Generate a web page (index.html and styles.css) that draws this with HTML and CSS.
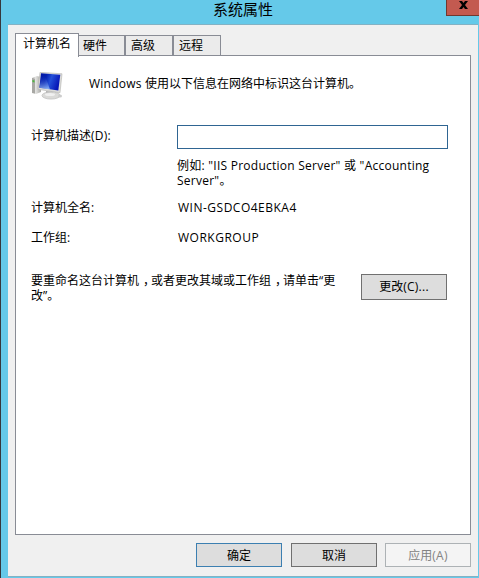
FILE: index.html
```html
<!DOCTYPE html>
<html lang="zh-CN">
<head>
<meta charset="utf-8">
<title>系统属性</title>
<link rel="stylesheet" href="styles.css">
</head>
<body>
<div class="window">
  <header class="titlebar">
    <h1 class="title">系统属性</h1>
    <button class="close" aria-label="关闭"><svg width="9" height="8" viewBox="0 0 9 8"><path d="M0 0h3l1.500 2L6 0h3L6 4l3 4H6L4.500 6 3 8H0l3-4z"/></svg></button>
  </header>
  <main class="client">
    <nav class="tabs">
      <span class="tab active">计算机名</span><span class="tab">硬件</span><span class="tab">高级</span><span class="tab">远程</span>
    </nav>
    <section class="panel">
      <div class="intro">
        <svg class="computer" width="32" height="30" viewBox="0 0 32 30">
          <defs>
            <linearGradient id="screen" x1="0" y1="0" x2="1" y2=".3"><stop offset="0" stop-color="#0014a0"/><stop offset=".35" stop-color="#0420b0"/><stop offset=".6" stop-color="#2450d8"/><stop offset="1" stop-color="#0818b8"/></linearGradient>
            <linearGradient id="shine" x1="0" y1="0" x2="0" y2="1"><stop offset="0" stop-color="#1238c8" stop-opacity="0"/><stop offset="1" stop-color="#b8dcff"/></linearGradient>
            <linearGradient id="tower" x1="0" y1="0" x2="1" y2="0"><stop offset="0" stop-color="#a8a8a4"/><stop offset=".4" stop-color="#e4e4e2"/><stop offset="1" stop-color="#a8a8a4"/></linearGradient>
          </defs>
          <path d="M1 6l5-2 4 1v15l-5 2-4-1z" fill="url(#tower)"/>
          <path d="M1 6l3 1v14.500l-3-.8z" fill="#a8a8a4"/>
          <path d="M1.500 8l2 .4v2l-2-.4z" fill="#4cb83c"/>
          <path d="M9 .3l22 1.500-2 19-22-3.500z" fill="#dcdcda" stroke="#b4b4b0" stroke-width=".6"/>
          <path d="M10 1.300l19.300 1.500-2 15.700-19-2.800z" fill="url(#screen)"/>
          <path d="M10 3l4 .2 5 14.200-10.300-1.600z" fill="url(#shine)" opacity=".7"/>
          <path d="M15 19l7 1v3h-7z" fill="#b0b0b0"/>
          <ellipse cx="20" cy="23.500" rx="9" ry="3.600" fill="#dadad8" stroke="#b4b4b4" stroke-width=".6"/>
          <ellipse cx="19" cy="22.500" rx="5" ry="1.500" fill="#f0f0f0"/>
          <ellipse cx="29" cy="24" rx="2" ry="1.500" fill="#ccc"/>
        </svg>
        <p class="intro-text"><span class="win">Windows</span> 使用以下信息在网络中标识这台计算机。</p>
      </div>
      <div class="row desc-row">
        <label class="label" for="desc">计算机描述<span class="win">(D):</span></label>
        <input class="field" id="desc" type="text">
      </div>
      <p class="example"><span class="ex-line">例如: "IIS Production Server" 或 "Accounting</span><br><span class="ex-line">Server"</span>。</p>
      <div class="row name-row"><span class="label">计算机全名:</span><span class="value name">WIN-GSDCO4EBKA4</span></div>
      <div class="row group-row"><span class="label">工作组:</span><span class="value group">WORKGROUP</span></div>
      <div class="rename">
        <p class="rename-text">要重命名这台计算机<span class="comma">，</span>或者更改其域或工作组<span class="comma">，</span>请单击“更<br>改”。</p>
        <button class="btn change">更改<span class="win">(C)...</span></button>
      </div>
    </section>
    <footer class="actions">
      <button class="btn default">确定</button>
      <button class="btn">取消</button>
      <button class="btn" disabled>应用<span class="win">(A)</span></button>
    </footer>
  </main>
</div>
</body>
</html>
```

FILE: styles.css
```css
* { box-sizing: border-box; }
body {
  margin: 0;
  color: #000;
  font: 12px/15px "Open Sans", "Noto Sans CJK SC", sans-serif;
}
p, h1 { margin: 0; }
button { padding: 0; font: inherit; color: inherit; border-radius: 0; }
.window {
  width: 479px;
  height: 578px;
  padding: 0 1px 1px 7px;
  border-left: 1px solid #36373c;
  background: #65c9e9;
  overflow: hidden;
}
.titlebar { display: flex; height: 24px; margin-right: -1px; }
.title {
  flex: 1;
  padding-left: 205px;
  font-size: 15px;
  font-weight: 400;
  line-height: 18px;
}
.close {
  display: flex;
  justify-content: center;
  align-items: flex-start;
  width: 33px;
  height: 16px;
  padding-top: 1px;
  border: 1px solid #70382f;
  border-width: 0 0 1px 1px;
  background: #c35a50;
}
.close svg { margin-right: -1px; }
.client {
  height: 553px;
  padding: 8px 7px 0;
  border-top: 1px solid #83b2c4;
  border-bottom: 1px solid #83b2c4;
  background: #f0f0f0;
}
.tabs { display: flex; align-items: flex-end; height: 22px; }
.tab {
  width: 48px;
  height: 20px;
  padding-left: 5px;
  border: 1px solid #898c95;
  border-bottom-width: 0;
  background: #ebebeb;
  line-height: 20px;
  white-space: nowrap;
}
.tab:nth-child(2) { width: 46px; padding-left: 4px; border-left-width: 0; }
.active {
  position: relative;
  width: 64px;
  height: 24px;
  margin-bottom: -2px;
  padding-left: 7px;
  background: #fff;
}
.panel {
  height: 480px;
  padding: 14px 22px 0 15px;
  border: 1px solid #898c95;
  background: #fff;
}
.intro { display: flex; height: 55px; }
.computer { margin-top: 2px; }
.intro-text { margin: 6px 0 0 26px; white-space: nowrap; }
.win { letter-spacing: .25px; }
.row { display: flex; }
.label { width: 146px; white-space: nowrap; }
.desc-row { height: 33px; }
.desc-row .label { padding-top: 3px; }
.field {
  width: 271px;
  height: 24px;
  padding: 0 4px;
  border: 1px solid #2f6592;
  background: #fff;
  font: inherit;
}
.example { height: 42px; margin-left: 146px; white-space: nowrap; }
.ex-line { letter-spacing: .25px; }
.name-row, .group-row { height: 30px; }
.value { padding-left: 1px; letter-spacing: .5px; }
.rename { display: flex; margin-top: 13px; }
.rename-text { width: 330px; white-space: nowrap; }
.comma { margin: 0 -4px 0 4px; }
.btn {
  width: 86px;
  height: 24px;
  border: 1px solid #707070;
  background: #ddd;
}
.change { height: 26px; margin-top: 1px; padding-bottom: 2px; }
.actions { display: flex; justify-content: flex-end; gap: 8px; padding-top: 8px; }
.default { margin-right: 1px; border-color: #3c7fb1; }
.btn:disabled { border-color: #adb2b5; background: #f4f4f4; color: #838383; }
```
